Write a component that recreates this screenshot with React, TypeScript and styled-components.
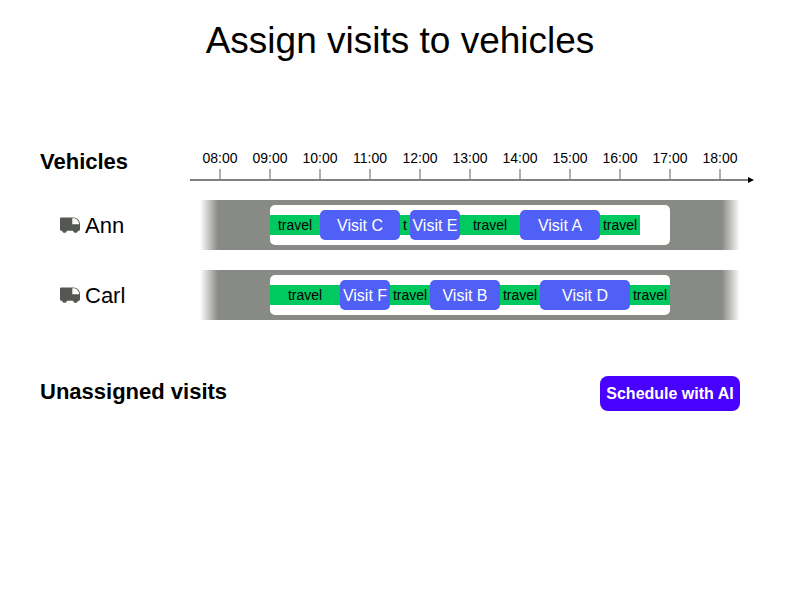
import React from "react";
import styled, { createGlobalStyle } from "styled-components";

const GlobalStyle = createGlobalStyle`
  *, *::before, *::after { box-sizing: border-box; }
  body {
    margin: 0;
    background: #ffffff;
    color: #000000;
    font-family: "Liberation Sans", Arial, Helvetica, sans-serif;
  }
`;

type Segment = { kind: "travel" | "visit"; minutes: number; label: string };
type Vehicle = { name: string; segments: Segment[] };

const travel = (minutes: number, label = "travel"): Segment => ({ kind: "travel", minutes, label });
const visit = (minutes: number, label: string): Segment => ({ kind: "visit", minutes, label });

const HOURS = Array.from({ length: 11 }, (_, i) => `${String(i + 8).padStart(2, "0")}:00`);
const SHIFT_MINUTES = 480;
const BEFORE_SHIFT = 84;
const AFTER_SHIFT = 84;

const VEHICLES: Vehicle[] = [
  {
    name: "Ann",
    segments: [
      travel(60),
      visit(96, "Visit C"),
      travel(12, "t"),
      visit(60, "Visit E"),
      travel(72),
      visit(96, "Visit A"),
      travel(48),
    ],
  },
  {
    name: "Carl",
    segments: [
      travel(84),
      visit(60, "Visit F"),
      travel(48),
      visit(84, "Visit B"),
      travel(48),
      visit(108, "Visit D"),
      travel(48),
    ],
  },
];

const Page = styled.main`
  padding: 16px 60px 40px 40px;
`;

const Title = styled.h1`
  margin: 0 -20px 0 0;
  font-size: 37px;
  line-height: 50px;
  font-weight: 400;
  text-align: center;
`;

const Planner = styled.section`
  display: grid;
  grid-template-columns: 160px minmax(0, 1fr);
  row-gap: 20px;
  margin-top: 80px;
`;

const Heading = styled.h2`
  margin: 0;
  font-size: 22px;
  line-height: 32px;
  font-weight: 700;
`;

const Axis = styled.div`
  margin: 0 -14px 0 -10px;
  height: 34px;
  position: relative;
  padding: 4px 9px 0 5px;
`;

const HourList = styled.ol`
  display: flex;
  margin: 0;
  padding: 0;
  list-style: none;
`;

const Hour = styled.li`
  flex: 1 1 0;
  min-width: 0;
  display: flex;
  flex-direction: column;
  align-items: center;
  gap: 3px;
  font-size: 14px;
  line-height: 16px;

  &::after {
    content: "";
    width: 2px;
    height: 11px;
    background: #b0b0b0;
  }
`;

const AxisLine = styled.div`
  position: absolute;
  left: 0;
  right: 4px;
  bottom: -1px;
  height: 2px;
  background: #808080;
`;

const Arrow = styled.svg`
  position: absolute;
  right: -4px;
  top: -2px;
  display: block;
`;

const VehicleLabel = styled.h3`
  display: flex;
  align-items: center;
  gap: 5px;
  margin: 0;
  padding-left: 20px;
  font-size: 22px;
  line-height: 30px;
  font-weight: 400;
`;

const VehicleName = styled.span`
  padding-top: 2px;
`;

const Track = styled.div`
  display: flex;
  height: 50px;
  padding: 5px 0;
  background: linear-gradient(to right, #ffffff, #888a85 18px calc(100% - 18px), #ffffff);
`;

const OffShift = styled.div<{ $minutes: number }>`
  flex: ${(p) => p.$minutes} 1 0;
`;

const Shift = styled.div`
  flex: ${SHIFT_MINUTES} 1 0;
  min-width: 0;
  display: flex;
  align-items: center;
  border-radius: 5px;
  background: #ffffff;
`;

const Block = styled.div<{ $minutes: number }>`
  flex: 0 0 ${(p) => (p.$minutes / SHIFT_MINUTES) * 100}%;
  min-width: 0;
  text-align: center;
  white-space: nowrap;
`;

const Travel = styled(Block)`
  height: 20px;
  background: #00c95f;
  font-size: 14px;
  line-height: 20px;
`;

const Visit = styled(Block)`
  height: 30px;
  border-radius: 5px;
  background: #5060f6;
  color: #ffffff;
  font-size: 16px;
  line-height: 32px;
`;

const Footer = styled.section`
  display: flex;
  align-items: flex-start;
  justify-content: space-between;
  margin-top: 56px;
`;

const ScheduleButton = styled.button`
  height: 35px;
  min-width: 140px;
  margin: 0;
  padding: 0 5px;
  border: 0;
  border-radius: 8px;
  background: #4800ff;
  color: #ffffff;
  font-family: inherit;
  font-size: 16px;
  font-weight: 700;
  line-height: 20px;
  white-space: nowrap;
  cursor: pointer;
`;

function TruckIcon() {
  return (
    <svg width="20" height="16" viewBox="0 0 20 16" aria-hidden="true">
      <path
        fill="#555753"
        fillRule="evenodd"
        d="M1.2 0.5H13.5C17.2 0.5 20 3.6 20 7.2V12.6Q20 13.8 18.8 13.8H18.2L17.2 15.2Q16.7 15.7 16 15.7H15Q14.3 15.7 13.9 15.2L12.9 13.8H7.1L6.1 15.2Q5.7 15.7 5 15.7H4Q3.3 15.7 2.9 15.2L1.9 13.8H1.2Q0 13.8 0 12.6V1.7Q0 0.5 1.2 0.5ZM12.3 1.3V7.3H19.2C19 4 16.6 1.3 13.4 1.3Z"
      />
    </svg>
  );
}

export default function App() {
  return (
    <>
      <GlobalStyle />
      <Page>
        <Title>Assign visits to vehicles</Title>
        <Planner>
          <Heading>Vehicles</Heading>
          <Axis>
            <HourList>
              {HOURS.map((hour) => (
                <Hour key={hour}>{hour}</Hour>
              ))}
            </HourList>
            <AxisLine>
              <Arrow width="6" height="6" viewBox="0 0 6 6" aria-hidden="true">
                <path d="M0 0L6 3L0 6Z" fill="#000000" />
              </Arrow>
            </AxisLine>
          </Axis>
          {VEHICLES.map((vehicle) => (
            <React.Fragment key={vehicle.name}>
              <VehicleLabel>
                <TruckIcon />
                <VehicleName>{vehicle.name}</VehicleName>
              </VehicleLabel>
              <Track>
                <OffShift $minutes={BEFORE_SHIFT} />
                <Shift>
                  {vehicle.segments.map((segment, index) => {
                    const Part = segment.kind === "visit" ? Visit : Travel;
                    return (
                      <Part key={index} $minutes={segment.minutes}>
                        {segment.label}
                      </Part>
                    );
                  })}
                </Shift>
                <OffShift $minutes={AFTER_SHIFT} />
              </Track>
            </React.Fragment>
          ))}
        </Planner>
        <Footer>
          <Heading>Unassigned visits</Heading>
          <ScheduleButton type="button">Schedule with AI</ScheduleButton>
        </Footer>
      </Page>
    </>
  );
}
